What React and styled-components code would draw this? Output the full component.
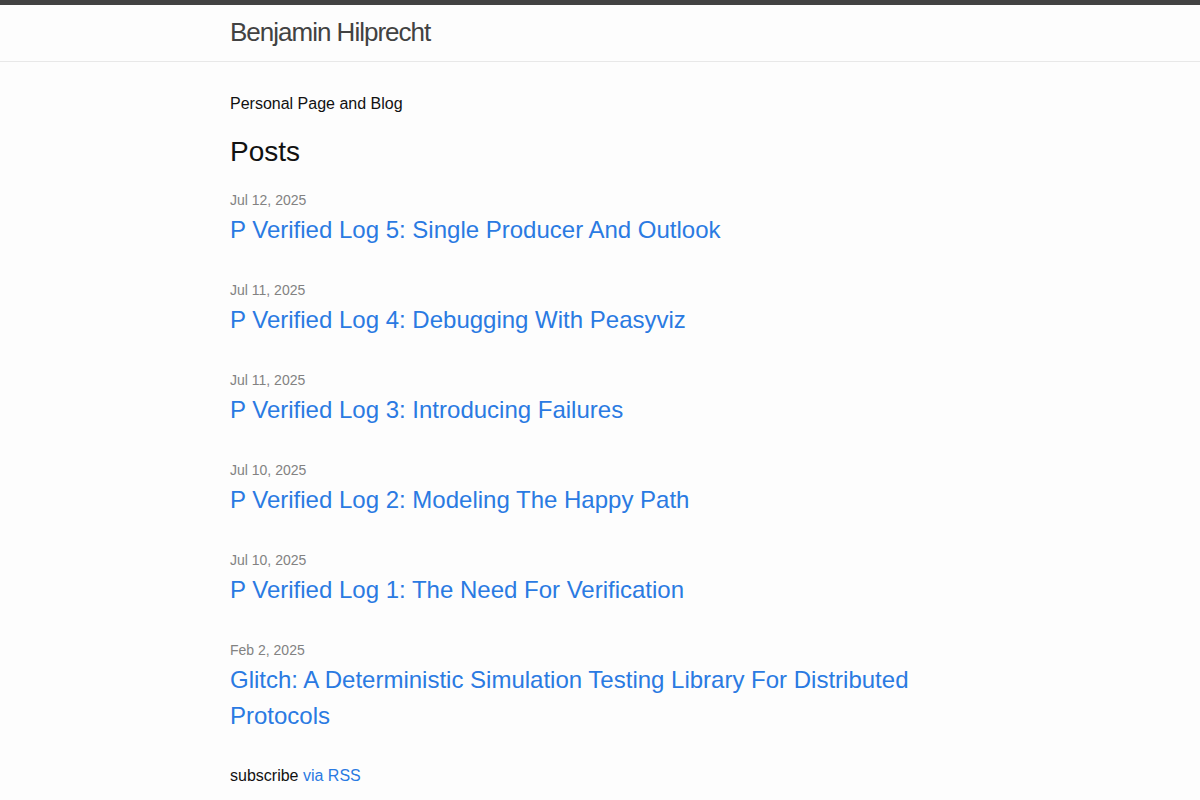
import React from 'react';
import styled, { createGlobalStyle } from 'styled-components';

const posts = [
  { date: 'Jul 12, 2025', title: 'P Verified Log 5: Single Producer And Outlook' },
  { date: 'Jul 11, 2025', title: 'P Verified Log 4: Debugging With Peasyviz' },
  { date: 'Jul 11, 2025', title: 'P Verified Log 3: Introducing Failures' },
  { date: 'Jul 10, 2025', title: 'P Verified Log 2: Modeling The Happy Path' },
  { date: 'Jul 10, 2025', title: 'P Verified Log 1: The Need For Verification' },
  { date: 'Feb 2, 2025', title: 'Glitch: A Deterministic Simulation Testing Library For Distributed Protocols' },
];

const App = () => {
  return (
    <>
      <GlobalStyle />
      <SiteHeader>
        <Wrapper>
          <SiteTitle href="#">Benjamin Hilprecht</SiteTitle>
        </Wrapper>
      </SiteHeader>
      <PageContent>
        <Wrapper>
          <Intro>Personal Page and Blog</Intro>
          <ListHeading>Posts</ListHeading>
          <PostList>
            {
              posts.map((post) => (
                <PostItem key={post.title}>
                  <PostMeta>{ post.date }</PostMeta>
                  <PostTitle>
                    <PostLink href="#">{ post.title }</PostLink>
                  </PostTitle>
                </PostItem>
              ))
            }
          </PostList>
          <Subscribe>subscribe <RssLink href="#">via RSS</RssLink></Subscribe>
        </Wrapper>
      </PageContent>
    </>
  );
}

const GlobalStyle = createGlobalStyle`
  html, body {
    margin: 0;
    padding: 0;
    background: #fdfdfd;
  }
  body {
    font-family: "Liberation Sans", Arial, sans-serif;
    font-size: 16px;
    line-height: 1.5;
    color: #111111;
  }
`;

const Wrapper = styled.div`
  max-width: 740px;
  margin: 0 auto;
  padding: 0 30px;
`;

const SiteHeader = styled.header`
  border-top: 5px solid #424242;
  border-bottom: 1px solid #e8e8e8;
  min-height: 55.95px;
`;

const SiteTitle = styled.a`
  display: inline-block;
  font-size: 26px;
  font-weight: 300;
  line-height: 54px;
  letter-spacing: -1px;
  color: #424242;
  text-decoration: none;
`;

const PageContent = styled.main`
  padding: 30px 0;
`;

const Intro = styled.p`
  margin: 0 0 15px;
`;

const ListHeading = styled.h2`
  margin: 0 0 17px;
  font-size: 28px;
  font-weight: 400;
  line-height: 42px;
`;

const PostList = styled.ul`
  list-style: none;
  margin: 0 0 30px;
  padding: 0;
  display: flex;
  flex-direction: column;
  gap: 32px;
`;

const PostItem = styled.li`
  margin: 0;
`;

const PostMeta = styled.span`
  display: block;
  margin-bottom: 2px;
  font-size: 14px;
  line-height: 20px;
  color: #828282;
`;

const PostTitle = styled.h3`
  margin: 0;
  font-weight: 400;
`;

const PostLink = styled.a`
  display: block;
  font-size: 24px;
  line-height: 36px;
  color: #2a7ae2;
  text-decoration: none;
`;

const Subscribe = styled.p`
  margin: 0;
`;

const RssLink = styled.a`
  color: #2a7ae2;
  text-decoration: none;
`;

export default App;
